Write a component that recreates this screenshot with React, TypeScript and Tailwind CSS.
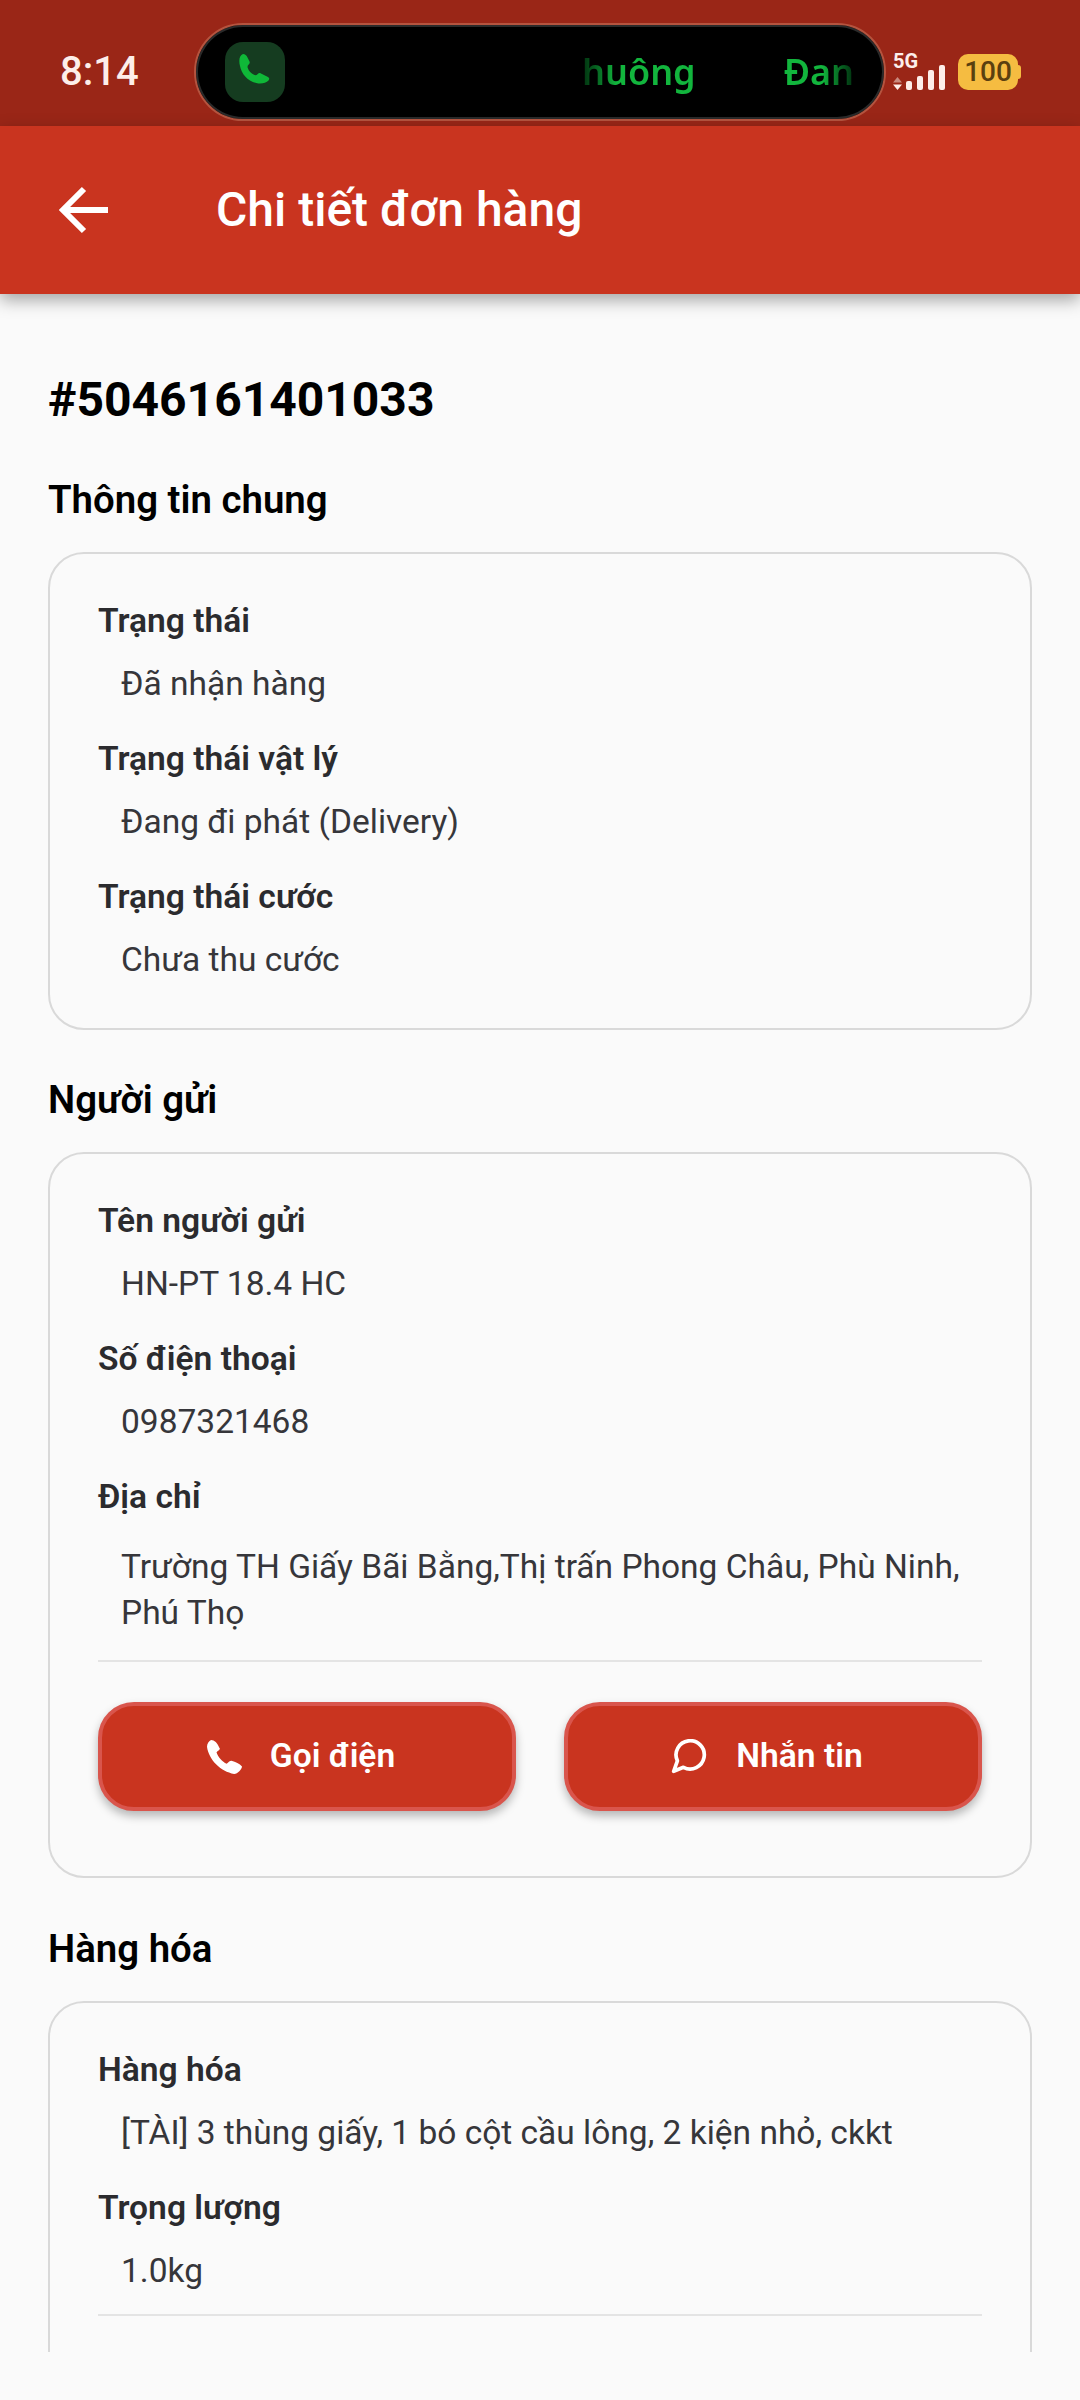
import React from "react";

type Row = { label: string; value: string[]; tall?: boolean };

const generalRows: Row[] = [
  { label: "Trạng thái", value: ["Đã nhận hàng"] },
  { label: "Trạng thái vật lý", value: ["Đang đi phát (Delivery)"] },
  { label: "Trạng thái cước", value: ["Chưa thu cước"] },
];

const senderRows: Row[] = [
  { label: "Tên người gửi", value: ["HN-PT 18.4 HC"] },
  { label: "Số điện thoại", value: ["0987321468"] },
  { label: "Địa chỉ", value: ["Trường TH Giấy Bãi Bằng,Thị trấn Phong Châu, Phù Ninh,", "Phú Thọ"], tall: true },
];

const goodsRows: Row[] = [
  { label: "Hàng hóa", value: ["[TÀI] 3 thùng giấy, 1 bó cột cầu lông, 2 kiện nhỏ, ckkt"] },
  { label: "Trọng lượng", value: ["1.0kg"] },
];

const InfoRows: React.FC<{ rows: Row[] }> = ({ rows }) => (
  <div className="flex flex-col gap-[29px]">
    {rows.map((row) => (
      <div key={row.label} className="flex flex-col gap-[17px]">
        <div className="h-[46px] text-[33.6px] leading-[46px] font-semibold text-[#2b2b2e]">{row.label}</div>
        <div className={row.tall ? "pt-[7px] pl-[23px] text-[33.5px] leading-[46px] text-[#36363a]" : "pl-[23px] text-[33.5px] leading-[46px] text-[#36363a]"}>
          {row.value.map((line) => (
            <div key={line} className="whitespace-nowrap">{line}</div>
          ))}
        </div>
      </div>
    ))}
  </div>
);

const SectionTitle: React.FC<{ children: React.ReactNode }> = ({ children }) => (
  <h2 className="mb-[32px] h-[44px] text-[38.4px] leading-[47px] font-semibold text-black">{children}</h2>
);

const ActionButton: React.FC<{ icon: React.ReactNode; label: string }> = ({ icon, label }) => (
  <button className="flex h-[109px] flex-1 items-center justify-center gap-[28px] rounded-[36px] border-[4px] border-[#d9554c] bg-[#c9341f] pr-[12px] text-[33.6px] font-semibold text-white shadow-[0_5px_10px_rgba(0,0,0,0.28)]">
    {icon}
    <span>{label}</span>
  </button>
);

const StatusBar: React.FC = () => (
  <div className="flex h-[126px] items-center bg-[#9a2617] pt-[18px]">
    <span className="ml-[60px] w-[134px] shrink-0 text-[40px] font-medium text-[#fdeeea]">8:14</span>
    {/* dynamic island */}
    <div className="flex h-[98px] w-[692px] shrink-0 items-center rounded-[49px] border-[2px] border-[#b5543f] bg-black pl-[29px] shadow-[inset_0_0_0_2px_#2a2a2a]">
      <div className="flex h-[60px] w-[60px] shrink-0 items-center justify-center rounded-[18px] bg-[#153c20]">
        <svg width="38" height="38" viewBox="0 0 38 38">
          <path
            d="M7 1c2 0 3.500 1.500 4.500 3.500l2 4c.5 1 .2 2-.8 3-1.200 1-1.400 2-.9 3.500 1 3 3.200 5.500 6.200 6.800 1.500.6 2.500.4 3.500-.6 1-1 2-1.400 3-1l7 3.500c2 1 2.200 2.500 1 3.800-2 2-6 3.500-10 3-10-1.500-17-9-18.500-17.500C2.500 7 3.500 2 7 1z"
            fill="#0fb838"
          />
        </svg>
      </div>
      <span className="ml-[297px] bg-linear-to-r from-[#02300f] via-[#12b53d] via-30% to-[#12b53d] bg-clip-text font-['Noto_Sans',sans-serif] text-[36px] font-semibold text-transparent">
        huông
      </span>
      <span className="ml-[88px] bg-linear-to-r from-[#12b53d] via-[#12b53d] via-55% to-[#02300f] bg-clip-text font-['Noto_Sans',sans-serif] text-[36px] font-semibold text-transparent">
        Đan
      </span>
    </div>
    {/* network + battery */}
    <div className="ml-[7px] flex h-[36px] w-[57px] shrink-0 flex-col justify-between">
      <span className="h-[15px] text-[20px] leading-[15px] font-bold text-[#fdeeea]">5G</span>
      <div className="-mt-[4px] flex items-end gap-[5px]">
        <svg width="9" height="13" viewBox="0 0 9 13" className="-mr-[1px]">
          <path d="M4.500 0 9 5.500H0z" fill="#c98a7f" />
          <path d="M0 7.500h9L4.500 13z" fill="#fdeeea" />
        </svg>
        <div className="h-[9px] w-[6px] rounded-[2px] bg-[#fdeeea]" />
        <div className="h-[14px] w-[6px] rounded-[2px] bg-[#fdeeea]" />
        <div className="h-[20px] w-[6px] rounded-[2px] bg-[#fdeeea]" />
        <div className="h-[25px] w-[6px] rounded-[2px] bg-[#fdeeea]" />
      </div>
    </div>
    <div className="ml-[8px] flex items-center">
      <div className="flex h-[36px] w-[60px] items-center justify-center rounded-[10px] bg-[#f5bc41] text-[28px] font-medium text-[#5a400f]">
        100
      </div>
      <div className="h-[14px] w-[3px] rounded-r-[3px] bg-[#f5bc41]" />
    </div>
  </div>
);

export default function App() {
  return (
    <div className="h-[2400px] w-[1080px] overflow-hidden bg-[#fafafa] font-['Roboto',sans-serif]">
      <StatusBar />
      <header className="relative z-10 flex h-[168px] items-center bg-[#c9341f] shadow-[0_6px_16px_rgba(0,0,0,0.35)]">
        <svg width="56" height="56" viewBox="0 0 56 56" className="ml-[56px]" fill="none" stroke="white" strokeWidth="6">
          <path d="M52 28H8M28 7 7 28 28 49" />
        </svg>
        <h1 className="ml-[104px] text-[48px] font-medium text-white">Chi tiết đơn hàng</h1>
      </header>

      <main className="h-[2058px] overflow-hidden px-[48px]">
        <div className="mt-[78px] mb-[48px] h-[56px] text-[48px] leading-[56px] font-bold text-black">#5046161401033</div>

        <SectionTitle>Thông tin chung</SectionTitle>
        <section className="mb-[46px] rounded-[36px] border-2 border-[#d9d9d9] px-[48px] pt-[44px] pb-[45px]">
          <InfoRows rows={generalRows} />
        </section>

        <SectionTitle>Người gửi</SectionTitle>
        <section className="mb-[47px] rounded-[36px] border-2 border-[#d9d9d9] px-[48px] pt-[44px] pb-[65px]">
          <InfoRows rows={senderRows} />
          <div className="mt-[24px] h-[2px] bg-[#e4e4e4]" />
          <div className="mt-[40px] flex gap-[48px]">
            <ActionButton
              label="Gọi điện"
              icon={
                <svg width="35" height="34" viewBox="50 42 103 100">
                  <path
                    d="M62 42C72 42 80 50 88 68C86 74 80 75 78 78C82 92 95 106 108 112C113 108 116 103 122 103C134 106 146 112 153 120C153 128 140 142 130 142C90 135 55 100 50 62C50 52 56 45 62 42Z"
                    fill="white"
                  />
                </svg>
              }
            />
            <ActionButton
              label="Nhắn tin"
              icon={
                <svg width="37" height="35" viewBox="38 48 110 104" fill="none" stroke="white" strokeWidth="11" strokeLinejoin="round">
                  <path d="M75 132A42 42 0 1 0 57 113L46 144Z" />
                </svg>
              }
            />
          </div>
        </section>

        <SectionTitle>Hàng hóa</SectionTitle>
        <section className="rounded-[36px] border-2 border-[#d9d9d9] px-[48px] pt-[44px] pb-[120px]">
          <InfoRows rows={goodsRows} />
          <div className="mt-[20px] h-[2px] bg-[#e4e4e4]" />
        </section>
      </main>
    </div>
  );
}
